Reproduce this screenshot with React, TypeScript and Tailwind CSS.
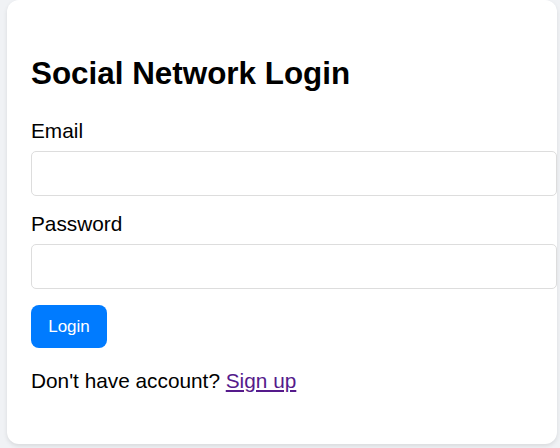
import React from "react";

export default function App() {
  return (
    <div
      className="min-h-screen w-full bg-[#f0f2f5] pl-[7px] overflow-hidden"
      style={{ fontFamily: '"Liberation Sans", Arial, sans-serif' }}
    >
      <div className="w-[550px] h-[444px] bg-white rounded-[12px] shadow-[0_2px_4px_rgba(0,0,0,0.1)] pt-[55px] pl-[24px] flex flex-col items-start text-black">
        <h1 className="text-[31.4px] leading-[37px] font-bold">Social Network Login</h1>
        <label className="mt-[27px] text-[20.8px] leading-[23px]">Email</label>
        <input
          type="email"
          className="mt-[9px] w-[526px] h-[45px] border border-[#dddddd] rounded-[5px] bg-white outline-none"
        />
        <label className="mt-[16px] text-[20.8px] leading-[23px]">Password</label>
        <input
          type="password"
          className="mt-[9px] w-[526px] h-[45px] border border-[#dddddd] rounded-[5px] bg-white outline-none"
        />
        <button className="mt-[16px] w-[76px] h-[43px] bg-[#007bff] text-white text-[17px] rounded-[8px] flex items-center justify-center">
          Login
        </button>
        <p className="mt-[21px] text-[20.8px] leading-[23px]">
          Don't have account?{" "}
          <a href="#" className="text-[#551a8b] underline">
            Sign up
          </a>
        </p>
      </div>
    </div>
  );
}
